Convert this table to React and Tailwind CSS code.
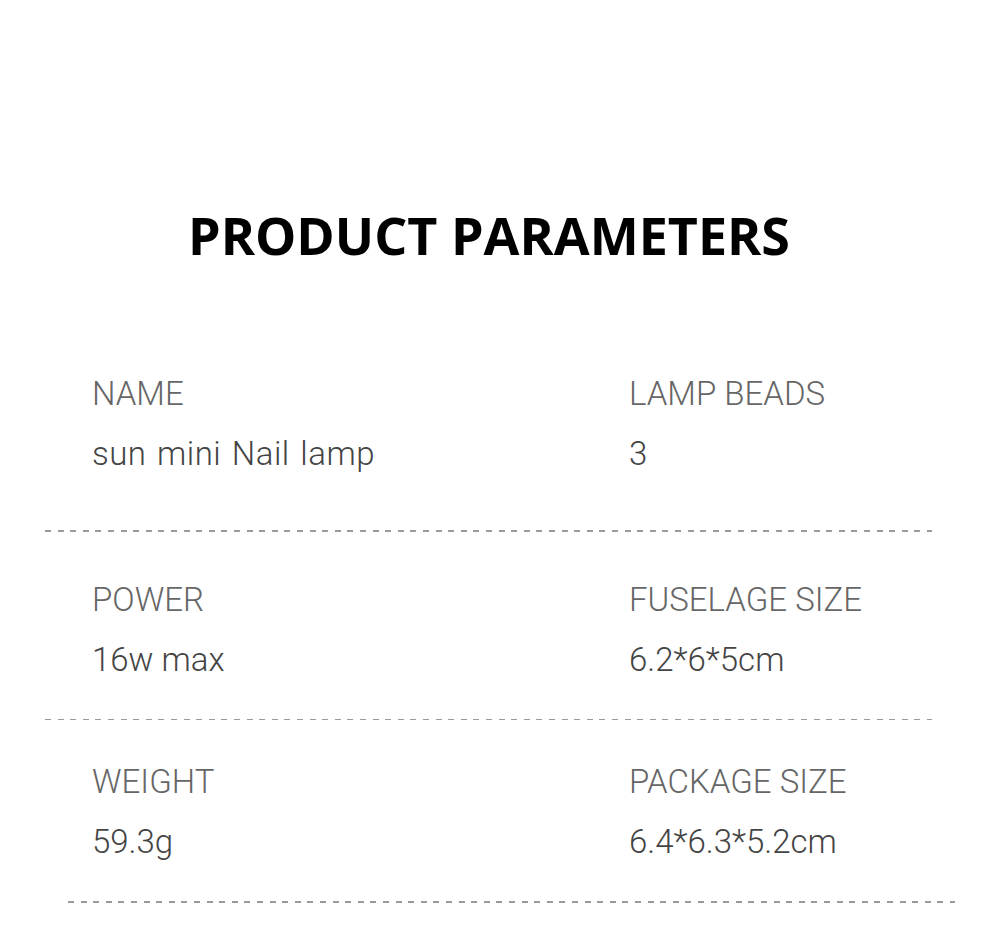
import React from 'react';

const rows = [
  { left: ['NAME', 'sun mini Nail lamp'], right: ['LAMP BEADS', '3'], top: 'mt-[104px]', line: 'mt-[56px] mb-[48px] ml-[45px]' },
  { left: ['POWER', '16w max'], right: ['FUSELAGE SIZE', '6.2*6*5cm'], top: '', line: 'mt-[39px] mb-[42px] ml-[45px]' },
  { left: ['WEIGHT', '59.3g'], right: ['PACKAGE SIZE', '6.4*6.3*5.2cm'], top: '', line: 'mt-[39px] ml-[68px]' },
];

function Field({ label, value, wide }) {
  return (
    <div className="flex flex-col">
      <div className="text-[33px] leading-[40px] font-light text-[#666]">{label}</div>
      <div className={`mt-[20px] text-[33px] leading-[40px] font-light text-[#444] ${wide ? 'tracking-[0.5px] [word-spacing:2px]' : ''}`}>{value}</div>
    </div>
  );
}

export default function App() {
  return (
    <div className="w-[1000px] h-[932px] bg-white overflow-hidden" style={{ fontFamily: 'Roboto, "Noto Sans", sans-serif' }}>
      <h1
        className="pt-[200px] pr-[22px] text-center text-[52px] leading-[70px] font-bold text-black"
        style={{ fontFamily: '"Open Sans", "Noto Sans", sans-serif' }}
      >
        PRODUCT PARAMETERS
      </h1>

      {rows.map((row, i) => (
        <div key={i} className={row.top}>
          <div className="grid grid-cols-[537px_1fr] pl-[92px]">
            <Field label={row.left[0]} value={row.left[1]} wide={i === 0} />
            <Field label={row.right[0]} value={row.right[1]} />
          </div>
          <div className={`h-[1.5px] w-[887px] bg-[repeating-linear-gradient(to_right,#9a9a9a_0_6px,transparent_6px_12.6px)] ${row.line}`} />
        </div>
      ))}
    </div>
  );
}
